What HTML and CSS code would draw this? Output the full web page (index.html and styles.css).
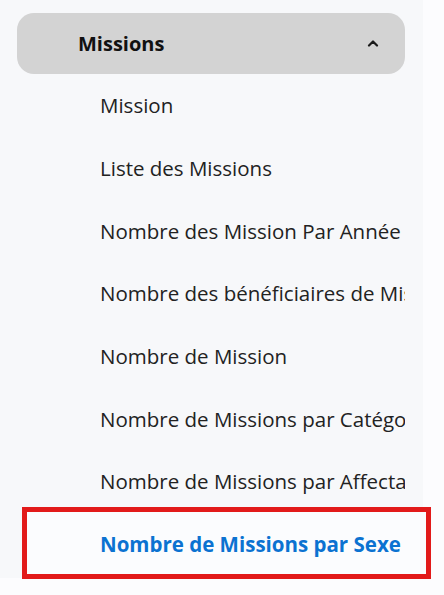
FILE: index.html
```html
<!DOCTYPE html>
<html lang="fr">
<head>
<meta charset="utf-8">
<link rel="stylesheet" href="styles.css">
</head>
<body>
<nav class="panel">
  <div class="group-head">
    <span class="group-title">Missions</span>
    <svg class="chev" width="12" height="8" viewBox="0 0 12 8"><polyline points="2,6.5 6,2.5 10,6.5" fill="none" stroke="#1a1a1a" stroke-width="2.2" stroke-linecap="round" stroke-linejoin="round"/></svg>
  </div>
  <ul class="items">
    <li class="item">Mission</li>
    <li class="item">Liste des Missions</li>
    <li class="item">Nombre des Mission Par Année</li>
    <li class="item">Nombre des bénéficiaires de Missions</li>
    <li class="item">Nombre de Mission</li>
    <li class="item">Nombre de Missions par Catégorie</li>
    <li class="item">Nombre de Missions par Affectation</li>
    <li class="item active">Nombre de Missions par Sexe</li>
  </ul>
</nav>
</body>
</html>
```
FILE: styles.css
```css
html, body {
  margin: 0;
  padding: 0;
  background: #fcfcfe;
}
body {
  width: 444px;
  height: 595px;
  overflow: hidden;
  font-family: "Open Sans", "Noto Sans", sans-serif;
}
.panel {
  width: 423px;
  height: 578px;
  background: #f7f8fa;
  padding-top: 13px;
  box-sizing: border-box;
}
.group-head {
  margin-left: 17px;
  width: 388px;
  height: 61px;
  border-radius: 17px;
  background: #d3d3d3;
  display: flex;
  align-items: center;
  box-sizing: border-box;
  padding-left: 61px;
  padding-right: 26px;
}
.group-title {
  flex: 1;
  font-weight: 700;
  font-size: 20px;
  color: #111;
}
.chev {
  display: block;
  margin-top: -2px;
}
.items {
  list-style: none;
  margin: 0;
  padding: 0;
}
.item {
  margin-left: 17px;
  width: 388px;
  height: 62.7px;
  box-sizing: border-box;
  padding-left: 83px;
  display: flex;
  align-items: center;
  white-space: nowrap;
  overflow: hidden;
  font-size: 20.5px;
  color: #222;
}
.item.active {
  color: #0b72d1;
  font-weight: 700;
  position: relative;
  z-index: 0;
  overflow: visible;
}
.item.active::before {
  content: "";
  position: absolute;
  left: 5px;
  top: -6px;
  width: 409px;
  height: 72px;
  border: 5px solid #e21a1a;
  box-sizing: border-box;
  background: #fbfcfe;
  z-index: -1;
}
```
